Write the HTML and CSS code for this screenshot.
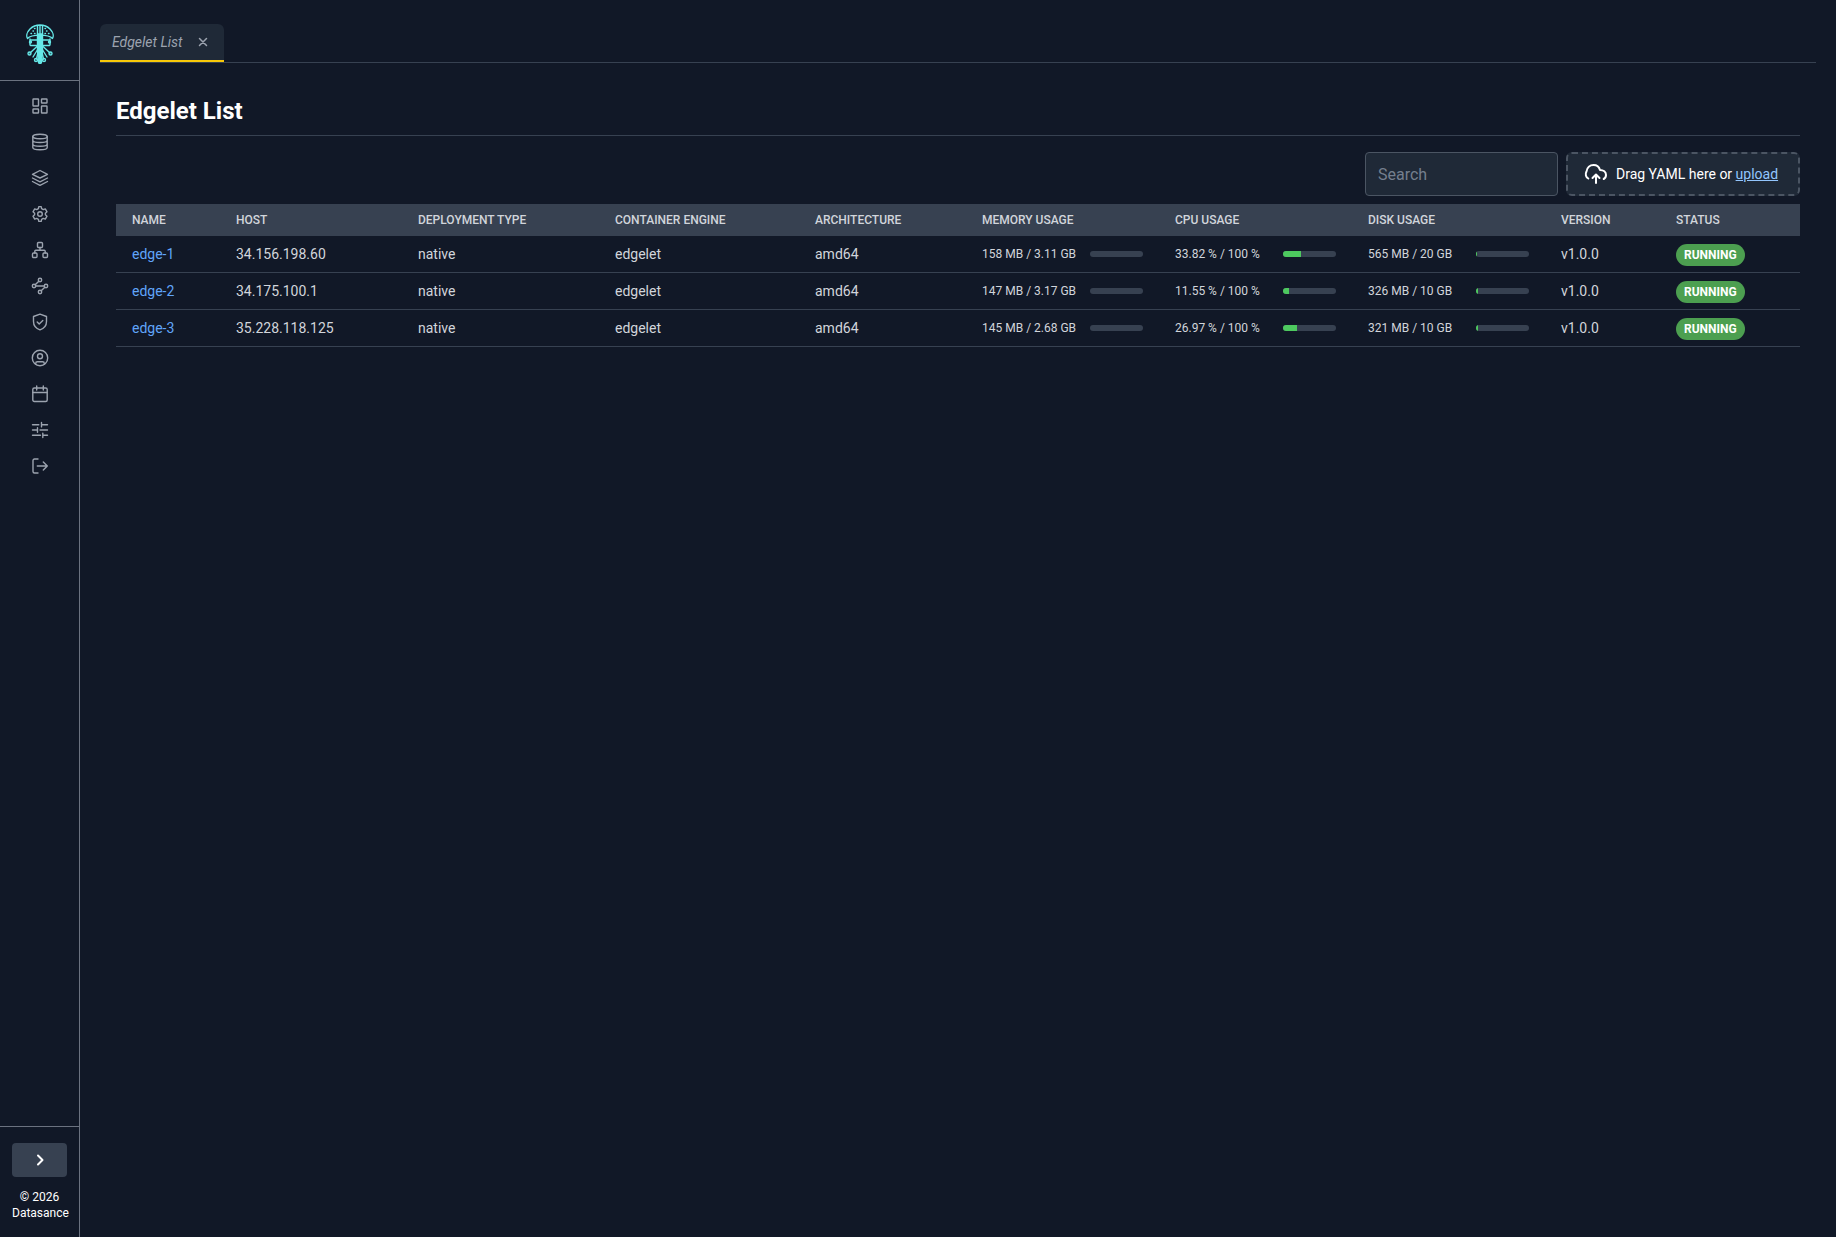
FILE: index.html
```html
<!DOCTYPE html>
<html lang="en">
<head>
<meta charset="utf-8">
<meta name="viewport" content="width=device-width, initial-scale=1">
<title>Edgelet List</title>
<link rel="stylesheet" href="styles.css">
</head>
<body>
<div class="app">
  <aside class="sidebar">
    <a class="brand" href="#" aria-label="Datasance home">
      <svg class="logo" viewBox="0 0 28 40" aria-hidden="true">
        <path class="logo-body" d="M11.500 10h5v16l-1 12h-3l-1-12z"/>
        <path d="M1.500 14.500C0 12 1 8 4 5 7 2 10 1 14 1s7 1 10 4c3 3 4 7 2.500 9.500-4-4.500-21-4.500-25 0zM5 16h18M4 15v6M24 15v6M4.500 21.500h6M23.500 21.500h-6M14 1v38M11.500 2v8M16.500 2v8"/>
        <path d="M5 9.500h.5M7 7h.5M8.500 4.500H9M8.500 9.500H9M19 9.500h.5M19 4.500h.5M20.500 7h.5M22.500 9.500h.5"/>
        <path d="M11.500 22L4 29M16.500 22l7.500 7M12.500 26l-2 9M15.500 26l2 9M12 25l-5 8M16 25l5 8"/>
        <circle cx="3.500" cy="29.500" r="1.500"/><circle cx="24.500" cy="29.500" r="1.500"/>
        <circle cx="10" cy="36" r="1.500"/><circle cx="18" cy="36" r="1.500"/>
        <circle cx="14" cy="38" r="1.500"/><circle cx="4.500" cy="18" r="1"/><circle cx="23.500" cy="18" r="1"/>
      </svg>
    </a>
    <nav class="nav" aria-label="Main">
      <a href="#" aria-label="Dashboard"><svg viewBox="0 0 20 20"><rect x="3" y="3" width="5.500" height="7" rx=".5"/><rect x="11.500" y="3" width="5.500" height="4" rx=".5"/><rect x="11.500" y="10" width="5.500" height="7" rx=".5"/><rect x="3" y="13" width="5.500" height="4" rx=".5"/></svg></a>
      <a href="#" aria-label="Storage"><svg viewBox="0 0 20 20"><ellipse cx="10" cy="4.500" rx="7.200" ry="2.300"/><path d="M2.800 4.500v11c0 1.300 3.200 2.300 7.200 2.300s7.200-1 7.200-2.300v-11M2.800 8.200c0 1.300 3.200 2.300 7.200 2.300s7.200-1 7.200-2.300M2.800 11.900c0 1.300 3.200 2.300 7.200 2.300s7.200-1 7.200-2.300"/></svg></a>
      <a href="#" aria-label="Applications"><svg viewBox="0 0 20 20"><path d="M10 2.500l7.500 3.800L10 10 2.500 6.300zM2.500 10l7.500 3.800 7.500-3.800M2.500 13.500l7.500 3.800 7.500-3.800"/></svg></a>
      <a href="#" aria-label="Settings"><svg viewBox="0 0 20 20"><path d="M8.400 4.600l.4-2h2.400l.4 2 1.700 1 2-.7 1.700 2.900-1.600 1.400v1.600l1.600 1.400-1.700 2.900-2-.7-1.700 1-.4 2H8.800l-.4-2-1.700-1-2 .7L3 12.200l1.600-1.400V9.200L3 7.800l1.700-2.900 2 .7z"/><circle cx="10" cy="10" r="2.300"/></svg></a>
      <a href="#" aria-label="Topology"><svg viewBox="0 0 20 20"><rect x="7.500" y="2.500" width="5" height="5" rx="1"/><rect x="2.500" y="13" width="4.500" height="4.500" rx="1"/><rect x="13" y="13" width="4.500" height="4.500" rx="1"/><path d="M10 7.500v2.800M4.800 13v-1.700a1 1 0 0 1 1-1h8.400a1 1 0 0 1 1 1V13"/></svg></a>
      <a href="#" aria-label="Network"><svg viewBox="0 0 20 20"><circle cx="10" cy="4" r="1.700"/><circle cx="4" cy="10" r="1.700"/><circle cx="16" cy="10" r="1.700"/><circle cx="10" cy="16" r="1.700"/><path d="M5.700 10h8.600M5.200 8.800l3.600-3.600M14.800 11.200l-3.600 3.600"/></svg></a>
      <a href="#" aria-label="Security"><svg viewBox="0 0 20 20"><path d="M10 2.200l6.500 2.300v5c0 4-2.600 7-6.500 8.300-3.900-1.300-6.500-4.300-6.500-8.300v-5zM7.200 10l2 2 3.600-3.600"/></svg></a>
      <a href="#" aria-label="Account"><svg viewBox="0 0 20 20"><circle cx="10" cy="10" r="7.700"/><circle cx="10" cy="8.300" r="2.500"/><path d="M5.700 16.300v-.8c0-1 .8-1.700 1.700-1.700h5.200c1 0 1.700.8 1.700 1.700v.8"/></svg></a>
      <a href="#" aria-label="Schedule"><svg viewBox="0 0 20 20"><rect x="2.800" y="4" width="14.400" height="13.500" rx="1.500"/><path d="M2.800 8.500h14.400M6.700 2v4M13.300 2v4"/></svg></a>
      <a href="#" aria-label="Preferences"><svg viewBox="0 0 20 20"><path d="M2.500 4.700h6.300M11.500 4.700h6M11.500 2.500v4.400M2.500 10h5M7.500 7.800v4.400M10 10h7.500M2.500 15.300h8M12.800 15.300h4.700M12.800 13.100v4.400"/></svg></a>
      <a href="#" aria-label="Log out"><svg viewBox="0 0 20 20"><path d="M8 3H4.500A1.500 1.500 0 0 0 3 4.500v11A1.500 1.500 0 0 0 4.500 17H8M7.300 10h10M13.300 6l4 4-4 4"/></svg></a>
    </nav>
    <div class="side-foot">
      <button class="expand" type="button" aria-label="Expand sidebar"><svg viewBox="0 0 12 12" aria-hidden="true"><path d="M4 1.500L8.500 6 4 10.500"/></svg></button>
      <p class="copyright">© 2026 Datasance</p>
    </div>
  </aside>
  <main class="main">
    <div class="tabs">
      <div class="tab">
        <a class="tab-name" href="#">Edgelet List</a>
        <button class="tab-close" type="button" aria-label="Close tab"><svg viewBox="0 0 10 10" aria-hidden="true"><path d="M1.500 1.500l7 7M8.500 1.500l-7 7"/></svg></button>
      </div>
    </div>
    <section class="content">
      <h1 class="title">Edgelet List</h1>
      <div class="tools">
        <input class="search" type="text" placeholder="Search" aria-label="Search">
        <div class="drop">
          <svg class="cloud" viewBox="0 0 24 24" aria-hidden="true"><path d="M4.300 16.500A5 5 0 0 1 2.500 9.500C3 5.500 6 3 9.500 3c3.500 0 5.700 2 6.500 5 3.500 0 6 2 6 5 0 2-.8 3.200-2.300 4M12 21v-8M8.500 16l3.500-3.500 3.500 3.500"/></svg>
          <span>Drag YAML here or <a class="upload" href="#">upload</a></span>
        </div>
      </div>
      <table class="grid">
        <colgroup><col class="c-name"><col class="c-host"><col class="c-deploy"><col class="c-engine"><col class="c-arch"><col class="c-usage"><col class="c-usage"><col class="c-usage"><col class="c-version"><col class="c-status"></colgroup>
        <thead>
          <tr><th>Name</th><th>Host</th><th>Deployment Type</th><th>Container Engine</th><th>Architecture</th><th>Memory Usage</th><th>CPU Usage</th><th>Disk Usage</th><th>Version</th><th>Status</th></tr>
        </thead>
        <tbody>
          <tr>
            <td><a class="node" href="#">edge-1</a></td><td>34.156.198.60</td><td>native</td><td>edgelet</td><td>amd64</td>
            <td><div class="usage"><span>158 MB / 3.11 GB</span><div class="bar"></div></div></td>
            <td><div class="usage"><span>33.82 % / 100 %</span><div class="bar"><div class="fill" style="width:33.82%"></div></div></div></td>
            <td><div class="usage"><span>565 MB / 20 GB</span><div class="bar"><div class="fill" style="width:2.76%"></div></div></div></td>
            <td>v1.0.0</td><td class="status"><span class="badge">RUNNING</span></td>
          </tr>
          <tr>
            <td><a class="node" href="#">edge-2</a></td><td>34.175.100.1</td><td>native</td><td>edgelet</td><td>amd64</td>
            <td><div class="usage"><span>147 MB / 3.17 GB</span><div class="bar"></div></div></td>
            <td><div class="usage"><span>11.55 % / 100 %</span><div class="bar"><div class="fill" style="width:11.55%"></div></div></div></td>
            <td><div class="usage"><span>326 MB / 10 GB</span><div class="bar"><div class="fill" style="width:3.18%"></div></div></div></td>
            <td>v1.0.0</td><td class="status"><span class="badge">RUNNING</span></td>
          </tr>
          <tr>
            <td><a class="node" href="#">edge-3</a></td><td>35.228.118.125</td><td>native</td><td>edgelet</td><td>amd64</td>
            <td><div class="usage"><span>145 MB / 2.68 GB</span><div class="bar"></div></div></td>
            <td><div class="usage"><span>26.97 % / 100 %</span><div class="bar"><div class="fill" style="width:26.97%"></div></div></div></td>
            <td><div class="usage"><span>321 MB / 10 GB</span><div class="bar"><div class="fill" style="width:3.13%"></div></div></div></td>
            <td>v1.0.0</td><td class="status"><span class="badge">RUNNING</span></td>
          </tr>
        </tbody>
      </table>
    </section>
  </main>
</div>
</body>
</html>
```
FILE: styles.css
```css
* { box-sizing: border-box; }
body { margin: 0; background: #111827; color: #fff; font-family: Roboto, "Liberation Sans", sans-serif; font-size: 14px; line-height: 20px; }
svg { display: block; fill: none; stroke: currentColor; stroke-linecap: round; stroke-linejoin: round; }
button { border: 0; padding: 0; background: none; color: inherit; font: inherit; cursor: pointer; }

.app { display: flex; min-height: 100vh; }

.sidebar { display: flex; flex-direction: column; flex: none; width: 80px; border-right: 1px solid #6b7280; }
.brand { display: flex; justify-content: center; padding: 24px 0 16px; border-bottom: 1px solid #6b7280; color: #66e8e8; }
.logo { width: 28px; height: 40px; stroke-width: 1.4; }
.logo-body { fill: currentColor; }
.nav { display: flex; flex-direction: column; align-items: center; gap: 16px; padding-top: 15px; }
.nav a { color: #9ca3af; }
.nav svg { width: 20px; height: 20px; stroke-width: 1.4; }
.side-foot { margin-top: auto; padding: 16px 12px; border-top: 1px solid #6b7280; }
.expand { display: flex; align-items: center; justify-content: center; width: 100%; height: 34px; border-radius: 4px; background: #374151; }
.expand svg { width: 12px; height: 12px; stroke-width: 2; }
.copyright { margin: 12px 0 0; font-size: 12px; line-height: 16px; text-align: center; }

.main { flex: 1; min-width: 0; padding: 24px 20px; }
.tabs { display: flex; border-bottom: 1px solid #374151; }
.tab { display: flex; align-items: center; gap: 6px; height: 38px; padding: 0 12px; border-bottom: 2px solid #f8c808; border-radius: 6px 6px 0 0; background: #1f2937; color: #9ca3af; }
.tab-name { min-width: 76px; color: inherit; font-style: italic; text-decoration: none; }
.tab-close { padding: 4px; }
.tab-close svg { width: 10px; height: 10px; stroke-width: 1.5; }

.content { padding: 32px 16px 0; }
.title { margin: 0 0 16px; padding-bottom: 8px; border-bottom: 1px solid #374151; font-size: 24px; line-height: 32px; font-weight: 700; }
.tools { display: flex; justify-content: flex-end; gap: 8px; margin-bottom: 8px; }
.search { width: 193px; height: 44px; padding: 0 12px; border: 1px solid #4b5563; border-radius: 4px; background: #1f2937; color: #fff; font: inherit; font-size: 16px; }
.search::placeholder { color: #757f8e; opacity: 1; }
.drop { display: flex; align-items: center; gap: 8px; min-width: 234px; height: 44px; padding: 0 16px; border: 2px dashed #4b5563; border-radius: 6px; background: #1f2937; white-space: nowrap; }
.cloud { width: 24px; height: 24px; stroke-width: 2; }
.upload { color: #93c5fd; text-decoration: underline; }

.grid { width: 100%; table-layout: fixed; border-collapse: separate; border-spacing: 0; color: #d1d5db; }
.c-name { width: 104px; }
.c-host { width: 182px; }
.c-deploy { width: 197px; }
.c-engine { width: 200px; }
.c-arch { width: 167px; }
.c-usage { width: 193px; }
.c-version { width: 115px; }
.c-status { width: 140px; }
.grid th { height: 32px; padding: 0 16px; background: #374151; font-size: 12px; line-height: 16px; font-weight: 500; text-align: left; text-transform: uppercase; white-space: nowrap; }
.grid td { height: 37px; padding: 0 16px; border-bottom: 1px solid #374151; white-space: nowrap; }
.grid .status { padding-top: 2px; }
.node { color: #60a5fa; text-decoration: none; }
.usage { display: flex; align-items: center; gap: 12px; font-size: 12px; line-height: 16px; }
.usage span { flex: none; width: 96px; }
.bar { flex: 1; height: 6px; overflow: hidden; border-radius: 3px; background: #374151; }
.fill { height: 100%; background: #4dc95f; }
.badge { display: inline-block; padding: 3px 8px; border-radius: 11px; background: #4c9f50; color: #fff; font-size: 12px; line-height: 16px; font-weight: 700; }
```
